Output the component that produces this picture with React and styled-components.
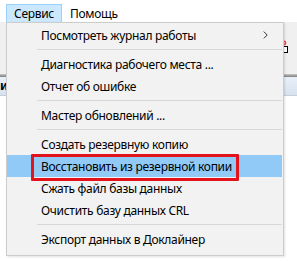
import React from 'react';
import styled, { createGlobalStyle } from 'styled-components';

const GlobalStyle = createGlobalStyle`
  html, body {
    margin: 0;
    padding: 0;
    background: #ffffff;
  }
  body {
    font-family: "Noto Sans", "Open Sans", sans-serif;
    font-size: 12px;
    letter-spacing: -0.3px;
    color: #000;
  }
`;

const Window = styled.div`
  position: relative;
  width: 297px;
  height: 261px;
  overflow: hidden;
  background: #ffffff;
  display: flex;
  flex-direction: column;
`;

const MenuBar = styled.div`
  height: 22px;
  box-sizing: border-box;
  padding: 4px 0 0 6px;
  display: flex;
  background: #ffffff;
`;

const BarItem = styled.div`
  height: 18px;
  box-sizing: border-box;
  padding: 0 7px;
  display: flex;
  align-items: center;
  border: 1px solid ${p => (p.open ? '#99d1ff' : 'transparent')};
  border-bottom: none;
  background: ${p => (p.open ? '#cce8ff' : 'transparent')};
  line-height: 1;
`;

const ToolArea = styled.div`
  height: 52px;
  background: #f0f0f0;
  display: flex;
  justify-content: flex-end;
  align-items: flex-start;
  padding: 18px 3px 0 0;
  box-sizing: border-box;
`;

const ToolIcon = styled.svg`
  width: 14px;
  height: 14px;
  display: block;
`;

const Rule = styled.div`
  height: 3px;
  background: linear-gradient(#c8c8c8, #7d7d7d);
`;

const GridHeader = styled.div`
  height: 19px;
  box-sizing: border-box;
  background: linear-gradient(#e9f0f8, #d6e2ef);
  border-bottom: 1px solid #c5d0dc;
  display: flex;
  align-items: flex-end;
  padding-bottom: 1px;
  font-weight: bold;
  white-space: nowrap;
`;

const HeaderCell = styled.span`
  margin-left: 0;
`;

const GridBody = styled.div`
  flex: 1;
  background: #ffffff;
`;

const Popup = styled.div`
  position: absolute;
  left: 6px;
  top: 22px;
  width: 278px;
  box-sizing: border-box;
  background: #f2f2f2;
  border: 1px solid #cccccc;
  padding: 1px 1px 5px 0;
  box-shadow: 1px 1px 2px rgba(0, 0, 0, 0.12);
`;

const Item = styled.div`
  position: relative;
  height: 22px;
  display: flex;
  align-items: center;
  padding-left: 34px;
  padding-right: 12px;
  background: ${p => (p.active ? '#91c9f7' : 'transparent')};
  white-space: nowrap;
`;

const Label = styled.span`
  position: relative;
  flex: 1;
  ${p =>
    p.marked &&
    `
    flex: 0 0 auto;
    &::after {
      content: '';
      position: absolute;
      left: -10px;
      right: -7px;
      top: -4px;
      bottom: -6px;
      border: 3px solid #e3131b;
      border-radius: 1px;
    }
  `}
`;

const Chevron = styled.svg`
  width: 5px;
  height: 8px;
  display: block;
  margin-right: 2px;
`;

const Separator = styled.div`
  height: 7px;
  display: flex;
  align-items: center;
  padding-left: 30px;

  &::before {
    content: '';
    flex: 1;
    height: 1px;
    background: #d7d7d7;
  }
`;

const menu = [
  { label: 'Посмотреть журнал работы', sub: true },
  '-',
  { label: 'Диагностика рабочего места ...' },
  { label: 'Отчет об ошибке' },
  '-',
  { label: 'Мастер обновлений ...' },
  '-',
  { label: 'Создать резервную копию' },
  { label: 'Восстановить из резервной копии', active: true },
  { label: 'Сжать файл базы данных' },
  { label: 'Очистить базу данных CRL' },
  '-',
  { label: 'Экспорт данных в Доклайнер' },
];

const App = () => (
  <>
    <GlobalStyle />
    <Window>
      <MenuBar>
        <BarItem open>Сервис</BarItem>
        <BarItem>Помощь</BarItem>
      </MenuBar>
      <ToolArea>
        <ToolIcon viewBox="0 0 14 14">
          <circle cx="4" cy="3" r="2.4" fill="#f04848" />
          <circle cx="4" cy="3" r="1.1" fill="#ffb0b0" />
          <rect x="0.5" y="6.5" width="7" height="6" fill="#ffffff" stroke="#000" />
        </ToolIcon>
      </ToolArea>
      <Rule />
      <GridHeader>
        <HeaderCell>и</HeaderCell>
      </GridHeader>
      <GridBody />

      <Popup>
        {menu.map((m, i) =>
          m === '-' ? (
            <Separator key={i} />
          ) : (
            <Item key={i} active={m.active}>
              <Label marked={m.active}>{m.label}</Label>
              {m.sub && (
                <Chevron viewBox="0 0 5 8">
                  <path d="M0.8 0.6 L4.2 4 L0.8 7.4" fill="none" stroke="#333" strokeWidth="1" />
                </Chevron>
              )}
            </Item>
          )
        )}
      </Popup>
    </Window>
  </>
);

export default App;
